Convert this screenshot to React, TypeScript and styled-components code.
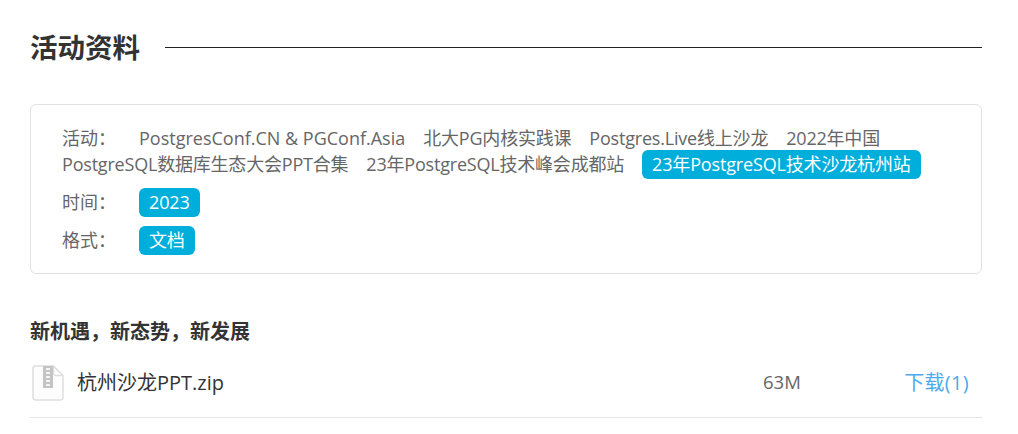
import React from "react";
import styled, { createGlobalStyle } from "styled-components";

const Global = createGlobalStyle`
  html, body { margin: 0; padding: 0; background: #fff; }
  body { font-family: "Open Sans", "Noto Sans CJK SC", sans-serif; color: #333; }
`;

const Page = styled.div`
  width: 952px;
  padding: 26px 36px 0 30px;
`;

const Heading = styled.div`
  display: flex;
  align-items: center;
  gap: 25px;
  height: 42px;
`;

const Title = styled.h2`
  margin: 1px 0 0;
  font-size: 27.5px;
  font-weight: 700;
  line-height: 42px;
  color: #333;
  white-space: nowrap;
`;

const Rule = styled.div`
  flex: 1;
  height: 1px;
  background: #222;
`;

const FilterCard = styled.div`
  box-sizing: border-box;
  height: 170px;
  margin-top: 36px;
  padding: 20px 31px;
  border: 1px solid #e2e2e2;
  border-radius: 6px;
  font-size: 18px;
  color: #666;
`;

const FilterRow = styled.div`
  line-height: 26px;
  margin-bottom: 11px;
`;

const Label = styled.span`
  display: inline-block;
  width: 77px;
`;

const Option = styled.span`
  display: inline-block;
  margin: -2px 18px -1px 0;
  padding: 0 10px;
  line-height: 29px;
  background: #00aedb;
  color: #fff;
  border-radius: 6px;
  letter-spacing: -0.16px;
`;

const Plain = styled.span<{ $tight?: boolean }>`
  margin-right: 18px;
  letter-spacing: ${(p) => (p.$tight ? "-0.2px" : "0")};
`;

const SectionTitle = styled.h3`
  margin: 44px 0 0;
  font-size: 20px;
  font-weight: 700;
  line-height: 28px;
  color: #333;
`;

const FileRow = styled.div`
  display: flex;
  align-items: center;
  height: 70px;
  margin-top: 2px;
  padding-bottom: 2px;
  border-bottom: 1px solid #e6e6e6;
  box-sizing: border-box;
`;

const FileIcon = styled.svg`
  width: 32px;
  height: 36px;
  margin: 2px 0 0 2px;
  flex: none;
`;

const FileName = styled.span`
  margin-left: 13px;
  flex: 1;
  font-size: 20px;
  color: #333;
`;

const Size = styled.span`
  width: 140px;
  font-size: 18.5px;
  color: #666;
`;

const Download = styled.a`
  width: 66px;
  margin-right: 13px;
  font-size: 20px;
  letter-spacing: 0.3px;
  color: #4ea9ee;
  text-align: right;
`;

export default function App() {
  return (
    <Page>
      <Global />
      <Heading>
        <Title>活动资料</Title>
        <Rule />
      </Heading>
      <FilterCard>
        <FilterRow>
          <Label>活动：</Label>
          <Plain>PostgresConf.CN &amp; PGConf.Asia</Plain>
          <Plain $tight>北大PG内核实践课</Plain>
          <Plain $tight>Postgres.Live线上沙龙</Plain>
          <Plain $tight>2022年中国PostgreSQL数据库生态大会PPT合集</Plain>
          <Plain $tight>23年PostgreSQL技术峰会成都站</Plain>
          <Option>23年PostgreSQL技术沙龙杭州站</Option>
        </FilterRow>
        <FilterRow>
          <Label>时间：</Label>
          <Option>2023</Option>
        </FilterRow>
        <FilterRow>
          <Label>格式：</Label>
          <Option>文档</Option>
        </FilterRow>
      </FilterCard>
      <SectionTitle>新机遇，新态势，新发展</SectionTitle>
      <FileRow>
        <FileIcon viewBox="0 0 32 36" fill="none">
          <path d="M3 1h18.5L31 10.5V32.5a2.5 2.5 0 0 1-2.5 2.5h-25A2.5 2.5 0 0 1 1 32.5v-29A2.5 2.5 0 0 1 3 1Z" fill="#fdfdfd" stroke="#dedede" strokeWidth="1.5" />
          <path d="M21.5 1v7a2.5 2.5 0 0 0 2.5 2.5h7" stroke="#dedede" strokeWidth="1.5" />
          <rect x="11" y="1" width="10" height="22" fill="#c4c4c4" />
          <path d="M14 4h4M14 8h4M14 12h4M14 16h4M14 20h4" stroke="#f4f4f4" strokeWidth="2" />
        </FileIcon>
        <FileName>杭州沙龙PPT.zip</FileName>
        <Size>63M</Size>
        <Download>下载(1)</Download>
      </FileRow>
    </Page>
  );
}
